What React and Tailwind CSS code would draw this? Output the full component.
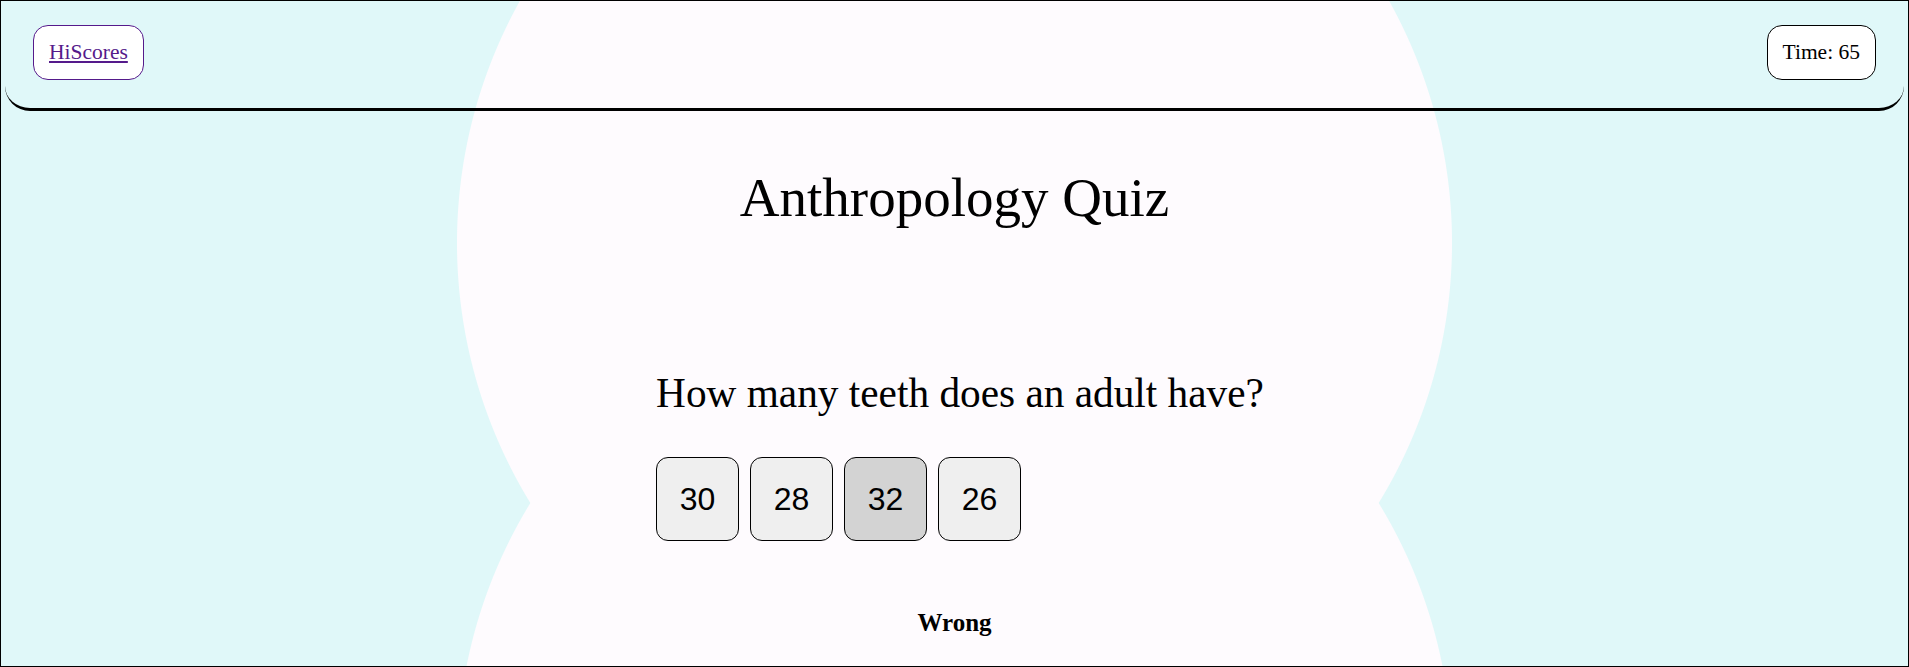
import React, { useState } from 'react';

const answers = ['30', '28', '32', '26'];

const App = () => {
  const [picked] = useState('32');

  return (
    <div className="relative w-[1909px] h-[667px] overflow-hidden border border-black bg-[#e0f8f9] bg-[radial-gradient(circle_at_50%_242px,#fefbfe_497px,transparent_498px),radial-gradient(circle_at_50%_762px,#fefbfe_497px,transparent_498px)] font-['Liberation_Serif',serif] text-black">
      <header className="mx-[4px] h-[110px] flex items-start justify-between px-[28px] pt-[24px] border-b-[3px] border-black rounded-b-[25px]">
        <a href="#" className="block bg-white border border-[#551a8b] rounded-[15px] px-[15px] py-[15px] text-[21.5px] leading-[23px] text-[#551a8b] underline">
          HiScores
        </a>
        <div className="bg-white border border-black rounded-[15px] px-[15px] py-[15px] text-[21.5px] leading-[23px]">
          Time: 65
        </div>
      </header>

      <h1 className="mt-[55px] text-center text-[55px] leading-[64px] font-normal">Anthropology Quiz</h1>

      <div className="mx-auto w-fit mt-[139px] pl-[11px]">
        <p className="text-[41.3px] leading-[48px]">How many teeth does an adult have?</p>
        <div className="mt-[40px] flex gap-[11px]">
          {answers.map(a => (
            <button key={a}
              className={`w-[83px] h-[84px] flex items-center justify-center border border-black rounded-[12px] font-['Liberation_Sans',sans-serif] text-[32px] ${a === picked ? 'bg-[#d3d3d3]' : 'bg-[#efefef]'}`}>
              {a}
            </button>
          ))}
        </div>
      </div>

      <p className="mt-[67px] text-center text-[25px] leading-[29px] font-bold">Wrong</p>
    </div>
  );
};

export default App;
